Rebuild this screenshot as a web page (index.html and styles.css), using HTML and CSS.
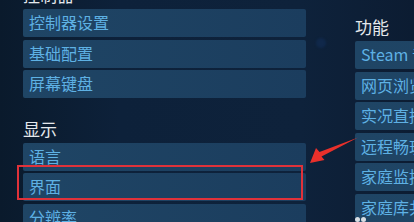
FILE: index.html
```html
<!DOCTYPE html>
<html lang="zh-CN">
<head>
<meta charset="utf-8">
<link rel="stylesheet" href="styles.css">
</head>
<body>
<div class="page">
  <div class="col col-left">
    <div class="section section-first">
      <div class="heading">控制器</div>
      <div class="item">控制器设置</div>
      <div class="item">基础配置</div>
      <div class="item">屏幕键盘</div>
    </div>
    <div class="section section-next">
      <div class="heading">显示</div>
      <div class="item">语言</div>
      <div class="item">界面</div>
      <div class="item">分辨率</div>
    </div>
  </div>
  <div class="col col-right">
    <div class="heading">功能</div>
    <div class="item">Steam 音乐</div>
    <div class="item">网页浏览器</div>
    <div class="item">实况直播</div>
    <div class="item">远程畅玩</div>
    <div class="item">家庭监控</div>
    <div class="item">家庭库共享</div>
  </div>
</div>
<div class="dot"></div>
<div class="cursor-dots"><span></span><span></span></div>
<div class="highlight"></div>
<svg class="arrow" width="414" height="222" viewBox="0 0 414 222">
  <polygon points="310,163 316,148 319.5,152 358,137.5 321.5,156.5 324.5,160" fill="#e8302b"/>
</svg>
</body>
</html>
```

FILE: styles.css
```css
html, body {
  margin: 0;
  padding: 0;
}
body {
  width: 414px;
  height: 222px;
  overflow: hidden;
  background: linear-gradient(to right, #0a1a2c 0px, #0d213a 120px, #0e223b 300px, #0c1c32 414px);
  font-family: "Noto Sans CJK SC", "Noto Sans", sans-serif;
  position: relative;
}
.page {
  display: flex;
  padding-left: 23px;
  gap: 49px;
}
.col {
  display: flex;
  flex-direction: column;
}
.col-left {
  width: 283px;
  flex: none;
}
.col-right {
  width: 220px;
  flex: none;
  padding-top: 17px;
}
.section {
  display: flex;
  flex-direction: column;
}
.section-first {
  margin-top: -15px;
}
.section-next {
  margin-top: 18px;
}
.heading {
  color: #e4e8ec;
  font-size: 17px;
  line-height: 20px;
  height: 20px;
  margin-bottom: 4px;
}
.item {
  height: 28px;
  line-height: 27px;
  margin-bottom: 2.5px;
  padding-left: 6px;
  font-size: 16px;
  color: #5eb1e4;
  background: linear-gradient(to right, #1f4565, #1b3d5e);
  border-radius: 2px;
  white-space: nowrap;
  overflow: hidden;
}
.col-right .item {
  background: linear-gradient(to right, #1f4565, #1e4262);
}
.dot {
  position: absolute;
  left: 316px;
  top: 38px;
  width: 10px;
  height: 10px;
  border-radius: 50%;
  background: #10284a;
  filter: blur(1px);
}
.cursor-dots {
  position: absolute;
  left: 355px;
  top: 217px;
  display: flex;
  gap: 1px;
}
.cursor-dots span {
  width: 5px;
  height: 5px;
  border-radius: 50%;
  background: #d8dde2;
}
.highlight {
  position: absolute;
  left: 17px;
  top: 165px;
  width: 282px;
  height: 31px;
  border: 2px solid #e0323a;
}
.arrow {
  position: absolute;
  left: 0;
  top: 0;
}
```
